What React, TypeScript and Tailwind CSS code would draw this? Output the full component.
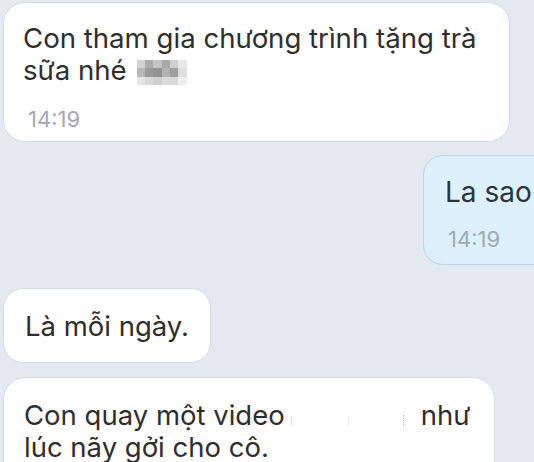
import React from "react";

const blocks = [
  "#d2d2d2", "#ababab", "#c4c4c4", "#a9a9a9", "#d0d0d0", "#e8e8e8",
  "#b8b8b8", "#9b9b9b", "#939393", "#b3b3b3", "#9e9e9e", "#dfdfdf",
  "#e4e4e4", "#d8d8d8", "#d0d0d0", "#dcdcdc", "#dadada", "#eeeeee",
];

function Mosaic() {
  return (
    <span className="inline-block overflow-hidden w-[50px] h-[25px] align-[-5px] ml-[10px]">
      <span className="grid grid-cols-6 grid-rows-3 w-full h-full">
        {blocks.map((c, i) => (
          <span key={i} className="block" style={{ background: c }} />
        ))}
      </span>
    </span>
  );
}

function Redacted() {
  return (
    <span className="inline-flex items-center w-[136px] h-[16px] align-[-1px] pl-[6px]">
      <span className="block w-[5px] h-[10px] border-l border-dotted border-[#cfcfcf]" />
      <span className="block w-[3px] h-[8px] ml-[52px] border-l border-dotted border-[#dadada]" />
      <span className="block w-[3px] h-[12px] ml-[52px] border-l border-dotted border-[#bdbdbd]" />
    </span>
  );
}

export default function App() {
  return (
    <div
      className="w-[534px] h-[462px] overflow-hidden bg-[#e4e9f1] text-[#2e2e2e]"
      style={{ fontFamily: "Inter, 'Noto Sans', sans-serif" }}
    >
      <div className="flex flex-col items-start pl-[3px] pt-[2px]">
        <div className="w-[507px] h-[140px] rounded-[22px] bg-white border border-[#d5dbe3] px-[19px] pt-[19px] whitespace-nowrap">
          <p className="text-[27.6px] leading-[32px]">
            Con tham gia chương trình tặng trà
            <br />
            sữa nhé
            <Mosaic />
          </p>
          <p className="text-[22px] leading-[26px] text-[#a4a8ac] mt-[20px] pl-[5px]">14:19</p>
        </div>

        <div className="self-end mr-[-20px] mt-[13px] w-[131px] h-[110px] rounded-[20px] bg-[#dcf1fc] border border-[#b9d3e3] pl-[21px] pt-[20px] whitespace-nowrap">
          <p className="text-[28px] leading-[32px] text-[#2a3540]">La sao</p>
          <p className="text-[22px] leading-[26px] text-[#a0aab1] mt-[18px] pl-[3px]">14:19</p>
        </div>

        <div className="mt-[23px] w-[208px] h-[75px] rounded-[20px] bg-white border border-[#d5dbe3] pl-[21px] flex items-center whitespace-nowrap">
          <p className="text-[27.5px] leading-[32px]">Là mỗi ngày.</p>
        </div>

        <div className="mt-[14px] w-[492px] h-[120px] rounded-[22px] bg-white border border-[#d5dbe3] pl-[20px] pt-[21px] whitespace-nowrap">
          <p className="text-[27.5px] leading-[32px]">
            Con quay một video
            <Redacted />
            như
            <br />
            lúc nãy gởi cho cô.
          </p>
        </div>
      </div>
    </div>
  );
}
